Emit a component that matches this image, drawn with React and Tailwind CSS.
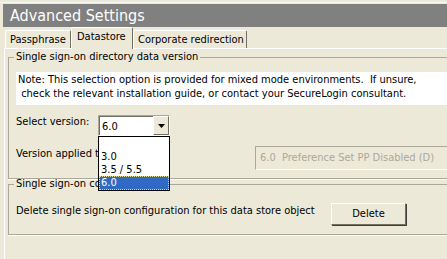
import React from 'react'

const font = { fontFamily: '"DejaVu Sans Condensed", "Liberation Sans", sans-serif' }

function Tab({ label, active, className = '' }) {
  if (active) {
    return (
      <div className={`relative z-10 -mb-px h-[22px] whitespace-nowrap bg-[#ece9d8] border-t border-l border-white border-r border-r-[#716f64] rounded-t-[2px] px-[5px] pt-[2px] text-[11px] leading-[14px] ${className}`}>
        {label}
      </div>
    )
  }
  return (
    <div className={`h-[18px] whitespace-nowrap bg-[#ece9d8] border-t border-l border-white border-r border-r-[#716f64] rounded-t-[2px] px-[4px] pt-[2px] text-[11px] leading-[14px] ${className}`}>
      {label}
    </div>
  )
}

export default function App() {
  return (
    <div className="relative w-[447px] h-[259px] overflow-hidden bg-[#ece9d8] text-black" style={font}>
      {/* top edge */}
      <div className="h-[4px] pt-[2px]">
        <div className="h-px bg-white/70" />
      </div>

      {/* title bar */}
      <div className="ml-[3px] h-[23px] bg-[#808080] pl-[7px] text-white text-[16px] leading-[23px]">
        Advanced Settings
      </div>

      {/* tabs */}
      <div className="flex items-end h-[21px] pl-[5px]">
        <Tab label="Passphrase" className="w-[66px]" />
        <Tab label="Datastore" active className="w-[62px]" />
        <Tab label="Corporate redirection" className="w-[114px]" />
      </div>

      {/* panel */}
      <div className="ml-[4px] h-[220px] border-t border-l border-white pl-[3px] pt-px text-[11px]">
        <fieldset className="w-[460px] border border-[#aca899] shadow-[0_1px_0_#fff] pl-[5px] pb-[8px]">
          <legend className="px-[2px] leading-[14px]">Single sign-on directory data version</legend>
          <div className="ml-[2px] mt-[8px] h-[33px] bg-white pl-[2px] pt-px leading-[14px]">
            <div>Note: This selection option is provided for mixed mode environments.&nbsp; If unsure,</div>
            <div>&nbsp;check the relevant installation guide, or contact your SecureLogin consultant.</div>
          </div>

          <div className="flex ml-[2px] mt-[10px] h-[21px]">
            <div className="w-[82px] pt-0 leading-[14px]">Select version:</div>
            <div className="flex w-[72px] h-[21px] border-t border-l border-[#aca899] border-b border-r border-b-white border-r-white">
              <div className="flex-1 bg-white border-t border-l border-[#716f64] pl-[2px] pt-[3px] leading-[14px]">6.0</div>
              <div className="flex items-center justify-center w-[16px] bg-[#ece9d8] border-t border-l border-white border-b border-r border-b-[#716f64] border-r-[#716f64]">
                <svg width="7" height="4" viewBox="0 0 7 4"><path d="M0 0h7L3.5 4z" fill="#000" /></svg>
              </div>
            </div>
          </div>

          <div className="flex ml-[2px] mt-[10px] h-[24px]">
            <div className="w-[239px]">
              <div className="w-[82px] overflow-hidden whitespace-nowrap pt-px leading-[14px]">Version applied to this object:</div>
            </div>
            <div className="flex-1 h-[24px] border-t border-l border-[#aca899] border-b border-b-white pl-[4px] pt-[4px] leading-[14px] text-[#aca899]">
              6.0&nbsp; Preference Set PP Disabled (D)
            </div>
          </div>
        </fieldset>

        <fieldset className="w-[460px] -mt-[1px] border border-[#aca899] shadow-[0_1px_0_#fff] pl-[5px] pb-[9px]">
          <legend className="px-[2px] leading-[12px]">Single sign-on configuration</legend>
          <div className="flex items-start ml-[2px] mt-[13px]">
            <div className="w-[315px] pt-[1px] leading-[14px]">Delete single sign-on configuration for this data store object</div>
            <button className="w-[75px] h-[22px] bg-[#ece9d8] border-t border-l border-white border-b border-r border-b-[#716f64] border-r-[#716f64] shadow-[1px_1px_0_#404040] leading-[14px]">
              Delete
            </button>
          </div>
        </fieldset>
      </div>

      {/* open dropdown list */}
      <div className="absolute left-[98px] top-[136px] z-20 w-[72px] h-[55px] border border-black bg-white text-[11px] leading-[13px]">
        <div className="h-[13px] pl-[2px]" />
        <div className="h-[13px] pl-[2px]">3.0</div>
        <div className="h-[13px] pl-[2px]">3.5 / 5.5</div>
        <div className="h-[14px] pl-[2px] bg-[#316ac5] text-white outline outline-1 outline-dotted outline-[#e0e0a0] -outline-offset-1">6.0</div>
      </div>
    </div>
  )
}
